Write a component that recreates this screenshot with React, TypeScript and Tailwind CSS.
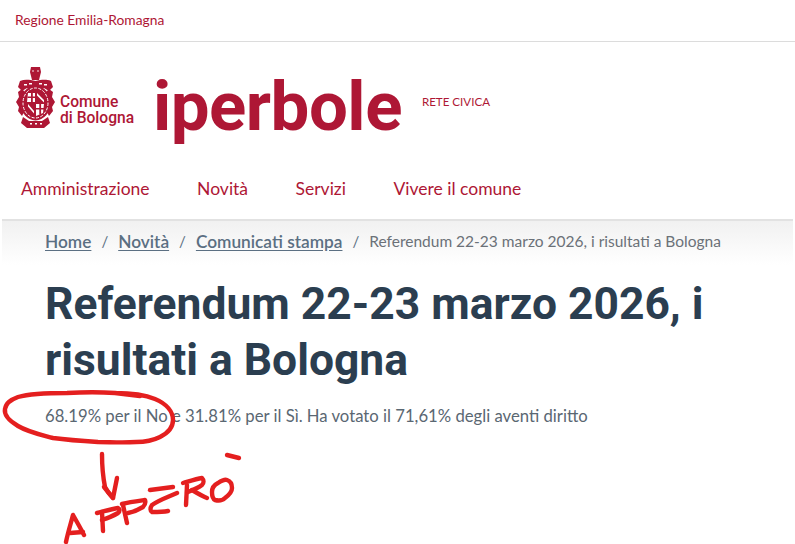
import React from "react";

const crimson = "text-[#ae1735]";

// stemma, redrawn roughly from the reference
const Crest = () => (
  <svg width="39" height="61" viewBox="0 0 39 61" className="shrink-0">
    <g fill="#ae1735">
      <path d="M15 0h9l1 5-2 8h-7l-2-8z" />
      <path d="M4 14c5-2 10-1 15.500 0 5.500-1 10-2 15.500 0l2 6-4 4-5-3H11l-5 3-4-4z" />
      <path d="M6 22l3 3-3 6 1 5-2 4 3 5-2 4-4-5 1-4-3-5 3-5-1-5z" />
      <path d="M33 22l-3 3 3 6-1 5 2 4-3 5 2 4 4-5-1-4 3-5-3-5 1-5z" />
      <ellipse cx="19.500" cy="36" rx="15" ry="17.500" />
      <path d="M7 50l6 4h13l6-4 2 6-6 5H11l-6-5z" />
    </g>
    <ellipse cx="19.500" cy="36" rx="12.500" ry="15" fill="none" stroke="#fff" strokeWidth="1" strokeDasharray="3 1.500" />
    <g fill="#fff">
      <path d="M12 26h7v9h-8z" />
      <path d="M20 37h8l-1 9-7 3z" />
      <circle cx="17" cy="4" r=".8" />
      <circle cx="22" cy="4" r=".8" />
      <path d="M8 17h3v1.500H8zM13 16h3v1.500h-3zM23 16h3v1.500h-3zM28 17h3v1.500h-3zM14 56h2v1.500h-2zM19 56h2v1.500h-2zM24 56h2v1.500h-2z" />
      <path d="M21 26l7 7v2.500l-7-7zM12 37l6 7v2.500l-6-7z" />
    </g>
    <g fill="#ae1735">
      <path d="M15 26h1.800v9H15zM11.500 29.500h7.500v1.600h-7.500zM23.300 37h1.800v10.500h-1.800zM20 41h8v1.600h-8z" />
    </g>
  </svg>
);

const Scribble = () => (
  <svg width="795" height="544" viewBox="0 0 795 544" className="absolute left-0 top-0 pointer-events-none">
    <g fill="none" stroke="#e41f1f" strokeWidth="4.400" strokeLinecap="round" strokeLinejoin="round">
      <path d="M115 393C130 393 143 394 155 399C167 404 173 412 173 420C173 428 168 433 160 437C152 441 146 442 136 442C122 443 110 442 98 442C82 441 68 440 53 438C38 434 28 432 18 426C8 420 4 414 5 409C6 403 10 400 18 397C32 393 50 393 67 393C85 392 100 392 115 393L140 396" />
      <path d="M102 454C102 465 103 477 105 487C107 491 110 495 113 498" />
      <path d="M104 487L113 498L117 478" />
      <path d="M66 542C68 532 71 523 73 515C77 522 81 529 84 535" />
      <path d="M70 533L83 532" />
      <path d="M102 512L103 531" />
      <path d="M97 513C105 511 112 509 118 508C120 509 120 511 118 513C113 516 108 518 102 520" />
      <path d="M123 505L127 523" />
      <path d="M122 504C130 502 138 501 145 500C146 503 145 505 143 507C138 510 133 512 128 513" />
      <path d="M150 490L173 487" />
      <path d="M177 493C168 497 159 500 152 505C150 508 150 511 152 512C157 512 163 512 168 511" />
      <path d="M187 485L186 505" />
      <path d="M183 483C190 481 196 479 202 478C204 480 204 483 202 485C198 488 193 490 188 492" />
      <path d="M192 490C197 493 202 496 207 498" />
      <path d="M218 483C214 485 212 488 212 492C212 496 213 499 215 500C219 501 223 500 225 498C229 495 232 491 232 488C232 484 230 481 227 480C224 479 221 481 218 483Z" />
      <path d="M227 455L239 458" />
    </g>
  </svg>
);

const Crumb = ({ children }: { children: React.ReactNode }) => (
  <>
    <a href="#" className="font-semibold text-[#5b6f82] underline underline-offset-2">{children}</a>
    <span className="text-[#5b6f82] text-[15px]">/</span>
  </>
);

export default function App() {
  return (
    <div className="relative w-[795px] h-[544px] overflow-hidden bg-white font-['Lato',sans-serif]">
      <div className="h-[42px] flex items-center pl-[15px] pb-[1px] border-b border-[#dcdcdc]">
        <span className={`text-[13.8px] ${crimson}`}>Regione Emilia-Romagna</span>
      </div>

      <header className="h-[110px] flex items-center pl-[16px]">
        <div className="flex items-end gap-[5px] w-[137px]">
          <Crest />
          <div className={`font-['Roboto',sans-serif] font-medium text-[15.600px] leading-[16px] pb-[2px] whitespace-nowrap ${crimson}`}>
            Comune<br />di Bologna
          </div>
        </div>
        <div className={`font-['Roboto',sans-serif] font-bold text-[69px] leading-none tracking-[-0.5px] pt-[18px] ${crimson}`}>iperbole</div>
        <div className={`ml-[20px] text-[11.600px] pt-[10px] ${crimson}`}>RETE CIVICA</div>
      </header>

      <nav className={`h-[67px] flex items-center pl-[21px] pt-[8px] gap-[47.500px] text-[17.500px] ${crimson}`}>
        <a href="#">Amministrazione</a>
        <a href="#">Novità</a>
        <a href="#">Servizi</a>
        <a href="#">Vivere il comune</a>
      </nav>

      <div className="mx-[2px] border-t-2 border-[#e2e2e2] h-[46px] bg-gradient-to-b from-[#f1f1f1] to-white flex items-center gap-[10px] pl-[43px] pb-[3px] text-[17.300px]">
        <Crumb>Home</Crumb>
        <Crumb>Novità</Crumb>
        <Crumb>Comunicati stampa</Crumb>
        <span className="text-[#6b7178] text-[15.500px]">Referendum 22-23 marzo 2026, i risultati a Bologna</span>
      </div>

      <main className="pl-[45px] pr-[60px]">
        <h1 className="mt-[11px] font-['Roboto',sans-serif] font-bold text-[44.400px] leading-[56px] text-[#2b3e50]">
          Referendum 22-23 marzo 2026, i risultati a Bologna
        </h1>
        <p className="mt-[16px] text-[16.700px] leading-[24px] text-[#5a6772]">
          68.19% per il No e 31.81% per il Sì. Ha votato il 71,61% degli aventi diritto
        </p>
      </main>

      <Scribble />
    </div>
  );
}
